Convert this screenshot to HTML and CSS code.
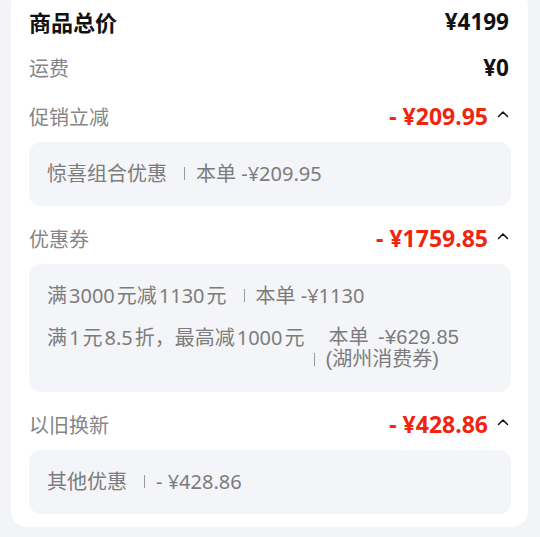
FILE: index.html
```html
<!DOCTYPE html>
<html lang="zh-CN">
<head>
<meta charset="utf-8">
<link rel="stylesheet" href="styles.css">
</head>
<body>
<div class="card">
  <div class="row row-total">
    <span class="label-strong">商品总价</span>
    <span class="amount">¥4199</span>
  </div>
  <div class="row">
    <span class="label">运费</span>
    <span class="amount">¥0</span>
  </div>

  <div class="section">
    <div class="section-head">
      <span class="label">促销立减</span>
      <span class="red-wrap"><span class="red">- ¥209.95</span><svg class="caret" viewBox="0 0 12 8" width="12" height="8"><path d="M1.5 6.5 L6 2 L10.5 6.5" fill="none" stroke="#111" stroke-width="1.5" stroke-linecap="round" stroke-linejoin="round"/></svg></span>
    </div>
    <div class="box">
      <div class="item"><span>惊喜组合优惠</span><span class="sep"></span><span>本单 -¥209.95</span></div>
    </div>
  </div>

  <div class="section">
    <div class="section-head">
      <span class="label">优惠券</span>
      <span class="red-wrap"><span class="red">- ¥1759.85</span><svg class="caret" viewBox="0 0 12 8" width="12" height="8"><path d="M1.5 6.5 L6 2 L10.5 6.5" fill="none" stroke="#111" stroke-width="1.5" stroke-linecap="round" stroke-linejoin="round"/></svg></span>
    </div>
    <div class="box">
      <div class="item"><span>满<span class="n">3000</span>元减<span class="n">1130</span>元</span><span class="sep"></span><span>本单 -¥1130</span></div>
      <div class="item item-wrap">
        <span>满<span class="n">1</span>元<span class="n">8.5</span>折，最高减<span class="n">1000</span>元</span>
        <span class="wrap-col">
          <span class="wrap-first">本单 -¥629.85</span>
          <span class="wrap-second"><span class="sep sep-tight"></span>(湖州消费券)</span>
        </span>
      </div>
    </div>
  </div>

  <div class="section">
    <div class="section-head">
      <span class="label">以旧换新</span>
      <span class="red-wrap"><span class="red">- ¥428.86</span><svg class="caret" viewBox="0 0 12 8" width="12" height="8"><path d="M1.5 6.5 L6 2 L10.5 6.5" fill="none" stroke="#111" stroke-width="1.5" stroke-linecap="round" stroke-linejoin="round"/></svg></span>
    </div>
    <div class="box">
      <div class="item"><span>其他优惠</span><span class="sep"></span><span>- ¥428.86</span></div>
    </div>
  </div>
</div>
</body>
</html>
```
FILE: styles.css
```css
* { box-sizing: border-box; }
html, body {
  margin: 0;
  padding: 0;
  background: #f3f4f8;
}
body {
  font-family: "Noto Sans", "Noto Sans CJK SC", sans-serif;
  color: #111;
  overflow: hidden;
  height: 537px;
}
.card {
  margin: -10px 12px 0 11px;
  background: #fff;
  border-radius: 16px;
  padding: 8px 17px 13px 18px;
}
.row {
  display: flex;
  align-items: center;
  justify-content: space-between;
  height: 46px;
}
.label-strong {
  font-size: 22px;
  font-weight: 700;
  color: #111;
}
.label {
  font-size: 20px;
  color: #858585;
}
.amount {
  font-size: 22.5px;
  font-weight: 700;
  color: #111;
  margin-right: 2px;
}
.section + .section { margin-top: 6px; }
.section-head {
  display: flex;
  align-items: center;
  justify-content: space-between;
  height: 52px;
}
.red-wrap {
  display: flex;
  align-items: center;
}
.red {
  font-size: 23px;
  font-weight: 700;
  color: #f0240f;
}
.caret {
  margin-left: 9px;
  margin-right: 2px;
  margin-top: -4px;
}
.box {
  background: #f4f5f8;
  border-radius: 12px;
  padding: 20px 18px 21px 18px;
  display: flex;
  flex-direction: column;
  gap: 18px;
}
.item {
  display: flex;
  align-items: center;
  font-size: 20px;
  line-height: 23px;
  color: #7c7c7c;
  white-space: nowrap;
}
.n { margin: 0 2px; }
.sep {
  display: inline-block;
  width: 1px;
  height: 13px;
  background: #9a9a9a;
  margin: 0 11px 0 17px;
}
.item-wrap { align-items: flex-start; margin-top: 1px; }
.wrap-col {
  display: flex;
  flex-direction: column;
  margin-left: 10px;
  font-family: "Liberation Sans", "Noto Sans CJK SC", sans-serif;
}
.wrap-first {
  padding-left: 14px;
  line-height: 22px;
  word-spacing: 3px;
  letter-spacing: 0.3px;
}
.wrap-second {
  display: flex;
  align-items: center;
  line-height: 23px;
}
.sep-tight { margin: 0 10px 0 0; }
```
